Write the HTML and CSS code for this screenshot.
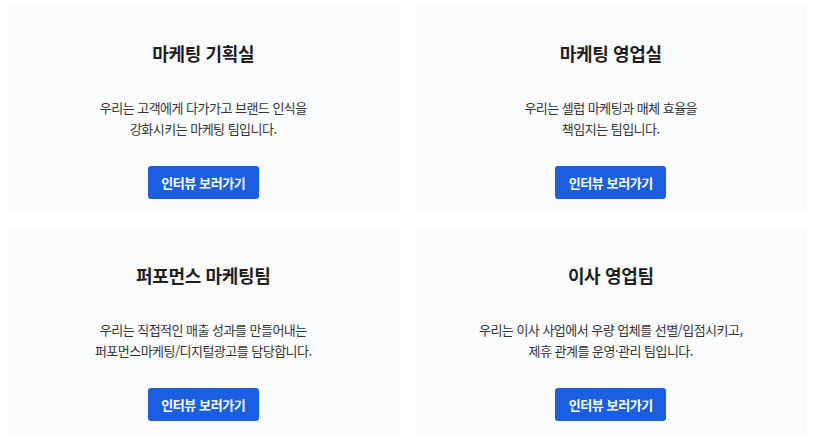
FILE: index.html
```html
<!DOCTYPE html>
<html lang="ko">
<head>
<meta charset="utf-8">
<title>팀 소개</title>
<link rel="stylesheet" href="styles.css">
</head>
<body>
<main class="grid">
  <section class="card">
    <h2 class="title">마케팅 기획실</h2>
    <p class="desc">우리는 고객에게 다가가고 브랜드 인식을<br>강화시키는 마케팅 팀입니다.</p>
    <a class="btn" href="#">인터뷰 보러가기</a>
  </section>
  <section class="card">
    <h2 class="title">마케팅 영업실</h2>
    <p class="desc">우리는 셀럽 마케팅과 매체 효율을<br>책임지는 팀입니다.</p>
    <a class="btn" href="#">인터뷰 보러가기</a>
  </section>
  <section class="card">
    <h2 class="title">퍼포먼스 마케팅팀</h2>
    <p class="desc">우리는 직접적인 매출 성과를 만들어내는<br>퍼포먼스마케팅/디지털광고를 담당합니다.</p>
    <a class="btn" href="#">인터뷰 보러가기</a>
  </section>
  <section class="card">
    <h2 class="title">이사 영업팀</h2>
    <p class="desc">우리는 이사 사업에서 우량 업체를 선별/입점시키고,<br>제휴 관계를 운영·관리 팀입니다.</p>
    <a class="btn" href="#">인터뷰 보러가기</a>
  </section>
</main>
</body>
</html>
```
FILE: styles.css
```css
html, body {
  margin: 0;
  padding: 0;
  background: #ffffff;
}
body {
  font-family: "Noto Sans CJK KR", "Noto Sans", sans-serif;
  color: #222;
}
.grid {
  display: grid;
  grid-template-columns: 1fr 1fr;
  column-gap: 15px;
  row-gap: 14px;
  padding: 5px 9px 5px 7px;
}
.card {
  height: 208px;
  box-sizing: border-box;
  background: #fbfcfe;
  box-shadow: 0 0 4px rgba(40, 60, 120, 0.015);
  display: flex;
  flex-direction: column;
  align-items: center;
  padding-top: 35px;
}
.title {
  margin: 0;
  font-size: 18px;
  line-height: 26px;
  font-weight: 700;
  color: #1e1e1e;
  letter-spacing: -0.02em;
}
.desc {
  margin: 31px 0 0;
  font-size: 13px;
  line-height: 21px;
  text-align: center;
  color: #333;
  letter-spacing: -0.04em;
}
.btn {
  margin-top: 27px;
  display: flex;
  align-items: center;
  justify-content: center;
  width: 111px;
  height: 33px;
  border-radius: 3px;
  background: #1a5fe1;
  color: #fff;
  font-size: 13px;
  font-weight: 700;
  text-decoration: none;
  letter-spacing: -0.03em;
}
```
